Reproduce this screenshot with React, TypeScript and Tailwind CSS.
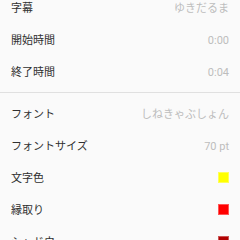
import React from "react";

const Row = ({ label, value, swatch }: { label: string; value?: string; swatch?: string }) => (
  <div className="flex h-8 items-center justify-between pl-[11px] pr-[11px]">
    <span className="pt-[3px] text-[11px] text-[#303030]">{label}</span>
    {value !== undefined && <span className="pt-[3px] text-[11px] text-[#bdbdbd]">{value}</span>}
    {swatch && <span className="h-[11px] w-[11px] border border-[#ffffff55]" style={{ backgroundColor: swatch }} />}
  </div>
);

export default function App() {
  return (
    <div
      className="h-[240px] w-[240px] overflow-hidden bg-[#fafafa]"
      style={{ fontFamily: 'Roboto, "Noto Sans CJK JP", sans-serif' }}
    >
      <div className="-mt-[8.5px]">
        <Row label="字幕" value="ゆきだるま" />
        <Row label="開始時間" value="0:00" />
        <Row label="終了時間" value="0:04" />
        <div className="py-[4.5px]">
          <div className="h-px bg-[#e0e0e0]" />
        </div>
        <Row label="フォント" value="しねきゃぶしょん" />
        <Row label="フォントサイズ" value="70 pt" />
        <Row label="文字色" swatch="#ffff00" />
        <Row label="縁取り" swatch="#ff0000" />
        <Row label="シャドウ" swatch="#b00000" />
      </div>
    </div>
  );
}
